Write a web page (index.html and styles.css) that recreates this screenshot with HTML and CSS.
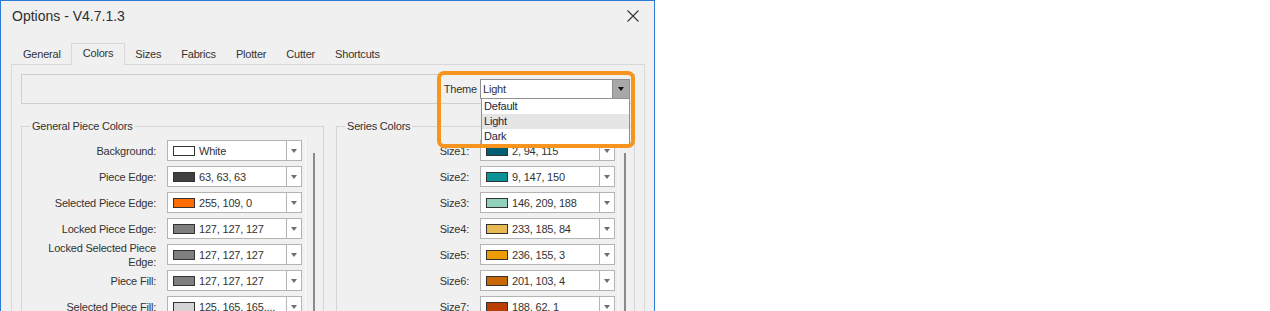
FILE: index.html
```html
<!DOCTYPE html>
<html lang="en">
<head>
  <meta charset="UTF-8">
  <title>Options - V4.7.1.3</title>
  <link rel="stylesheet" href="styles.css">
</head>
<body>
  <div class="window">
    <div class="titlebar">
      <span class="title">Options - V4.7.1.3</span>
      <svg class="close" width="12" height="12" viewBox="0 0 12 12"><path d="M0.5 0.5L11.5 11.5M11.5 0.5L0.5 11.5" stroke="#333" stroke-width="1.1" fill="none"/></svg>
    </div>

    <div class="tabs">
      <div class="tab">General</div>
      <div class="tab active">Colors</div>
      <div class="tab">Sizes</div>
      <div class="tab">Fabrics</div>
      <div class="tab">Plotter</div>
      <div class="tab">Cutter</div>
      <div class="tab">Shortcuts</div>
    </div>

    <div class="panel">
      <div class="themebar">
        <span>Theme</span>
        <div class="theme-select">
          <span class="theme-value">Light</span>
          <span class="theme-btn"></span>
          <ul class="theme-list">
            <li>Default</li>
            <li class="selected">Light</li>
            <li>Dark</li>
          </ul>
        </div>
      </div>

      <div class="groups">
        <fieldset class="group group-left">
          <legend>General Piece Colors</legend>
          <div class="group-body">
            <div class="rows">
              <div class="row"><span class="label">Background:</span><div class="combo"><span class="swatch" style="background:#ffffff"></span><span class="combo-text">White</span><span class="combo-btn"></span></div></div>
              <div class="row"><span class="label">Piece Edge:</span><div class="combo"><span class="swatch" style="background:rgb(63,63,63)"></span><span class="combo-text">63, 63, 63</span><span class="combo-btn"></span></div></div>
              <div class="row"><span class="label">Selected Piece Edge:</span><div class="combo"><span class="swatch" style="background:rgb(255,109,0)"></span><span class="combo-text">255, 109, 0</span><span class="combo-btn"></span></div></div>
              <div class="row"><span class="label">Locked Piece Edge:</span><div class="combo"><span class="swatch" style="background:rgb(127,127,127)"></span><span class="combo-text">127, 127, 127</span><span class="combo-btn"></span></div></div>
              <div class="row"><span class="label">Locked Selected Piece Edge:</span><div class="combo"><span class="swatch" style="background:rgb(127,127,127)"></span><span class="combo-text">127, 127, 127</span><span class="combo-btn"></span></div></div>
              <div class="row"><span class="label">Piece Fill:</span><div class="combo"><span class="swatch" style="background:rgb(127,127,127)"></span><span class="combo-text">127, 127, 127</span><span class="combo-btn"></span></div></div>
              <div class="row"><span class="label">Selected Piece Fill:</span><div class="combo"><span class="swatch" style="background:#d4d4d4"></span><span class="combo-text">125, 165, 165,...</span><span class="combo-btn"></span></div></div>
            </div>
            <div class="scroll"></div>
          </div>
        </fieldset>

        <fieldset class="group group-right">
          <legend>Series Colors</legend>
          <div class="group-body">
            <div class="rows">
              <div class="row"><span class="label">Size1:</span><div class="combo"><span class="swatch" style="background:rgb(2,94,115)"></span><span class="combo-text">2, 94, 115</span><span class="combo-btn"></span></div></div>
              <div class="row"><span class="label">Size2:</span><div class="combo"><span class="swatch" style="background:rgb(9,147,150)"></span><span class="combo-text">9, 147, 150</span><span class="combo-btn"></span></div></div>
              <div class="row"><span class="label">Size3:</span><div class="combo"><span class="swatch" style="background:rgb(146,209,188)"></span><span class="combo-text">146, 209, 188</span><span class="combo-btn"></span></div></div>
              <div class="row"><span class="label">Size4:</span><div class="combo"><span class="swatch" style="background:rgb(233,185,84)"></span><span class="combo-text">233, 185, 84</span><span class="combo-btn"></span></div></div>
              <div class="row"><span class="label">Size5:</span><div class="combo"><span class="swatch" style="background:rgb(236,155,3)"></span><span class="combo-text">236, 155, 3</span><span class="combo-btn"></span></div></div>
              <div class="row"><span class="label">Size6:</span><div class="combo"><span class="swatch" style="background:rgb(201,103,4)"></span><span class="combo-text">201, 103, 4</span><span class="combo-btn"></span></div></div>
              <div class="row"><span class="label">Size7:</span><div class="combo"><span class="swatch" style="background:rgb(188,62,1)"></span><span class="combo-text">188, 62, 1</span><span class="combo-btn"></span></div></div>
            </div>
            <div class="scroll"></div>
          </div>
        </fieldset>
      </div>
    </div>

    <div class="highlight"></div>
  </div>
</body>
</html>
```

FILE: styles.css
```css
* { box-sizing: border-box; }
html, body { margin: 0; overflow: hidden; background: #fff; }
body { font-family: "Liberation Sans", Arial, sans-serif; font-size: 11px; letter-spacing: -0.2px; color: #333; }

.window { position: relative; width: 655px; height: 420px; background: #f0f0f0; border: 1px solid #2b7bd3; border-bottom: none; }
.titlebar { height: 30px; display: flex; align-items: center; justify-content: space-between; padding: 0 15px 0 11px; }
.title { font-size: 14px; letter-spacing: 0; color: #2e2e2e; }

.tabs { display: flex; align-items: flex-end; height: 21px; margin-top: 12px; padding-left: 12px; }
.tab { height: 19px; line-height: 19px; padding: 0 10px; }
.tab.active { position: relative; z-index: 1; height: 22px; line-height: 19px; padding: 0 11px 2px; margin-bottom: -1px; border: 1px solid #d9d9d9; border-bottom: none; background: #f0f0f0; }

.panel { margin: 0 9px 0 10px; height: 300px; border: 1px solid #d9d9d9; padding: 9px 9px 0; }

.themebar { position: relative; z-index: 2; height: 30px; border: 1px solid #cfcfcf; display: flex; justify-content: flex-end; align-items: center; gap: 3px; padding-right: 4px; }
.theme-select { position: relative; width: 150px; height: 20px; border: 1px solid #8f8f8f; background: #fff; display: flex; }
.theme-value { flex: 1; padding-left: 2px; line-height: 18px; }
.theme-btn { width: 17px; background: #a8a8a8; border-left: 1px solid #8f8f8f; display: flex; align-items: center; justify-content: center; }
.theme-btn::after { content: ""; border-left: 3.5px solid transparent; border-right: 3.5px solid transparent; border-top: 4px solid #111; }
.theme-list { position: absolute; left: 0; top: 18px; width: 149px; margin: 0; padding: 0; list-style: none; background: #fff; border: 1px solid #8f8f8f; }
.theme-list li { height: 15px; line-height: 15px; padding-left: 2px; color: #1d2540; }
.theme-list li.selected { background: #e5e5e5; }

.groups { display: flex; gap: 12px; margin-top: 15px; }
.group { margin: 0; min-width: 0; height: 240px; padding: 3px 0 0 8px; border: 1px solid #d5d5d5; }
.group legend { padding: 0 2px; line-height: 15px; }
.group-left { width: 303px; }
.group-right { width: 299px; }

.group-body { display: flex; margin-left: 6px; }
.rows { display: flex; flex-direction: column; gap: 5px; padding: 3px 3px 0 0; border-right: 1px solid #fafafa; }
.row { display: grid; grid-template-columns: 120px 135px; grid-template-rows: 21px; column-gap: 11px; height: 21px; align-items: center; }
.group-right .row { grid-template-columns: 118px 135px; }
.label { text-align: right; line-height: 14px; }

.combo { height: 21px; border: 1px solid #b4b4b4; background: #fff; display: flex; align-items: center; }
.swatch { width: 22px; height: 10px; margin-left: 5px; border: 1px solid #333; }
.combo-text { flex: 1; margin-left: 4px; white-space: nowrap; overflow: hidden; }
.combo-btn { width: 15px; height: 100%; border-left: 1px solid #b4b4b4; display: flex; align-items: center; justify-content: center; }
.combo-btn::after { content: ""; border-left: 3.5px solid transparent; border-right: 3.5px solid transparent; border-top: 4px solid #6e6e6e; }

.scroll { width: 2px; height: 200px; margin: 16px 0 0 7px; background: #8a8a8a; }
.group-right .scroll { margin-left: 5px; }

.highlight { position: absolute; left: 436px; top: 70px; width: 198px; height: 77px; border: 4px solid #f7941d; border-radius: 7px; pointer-events: none; z-index: 3; }
```
